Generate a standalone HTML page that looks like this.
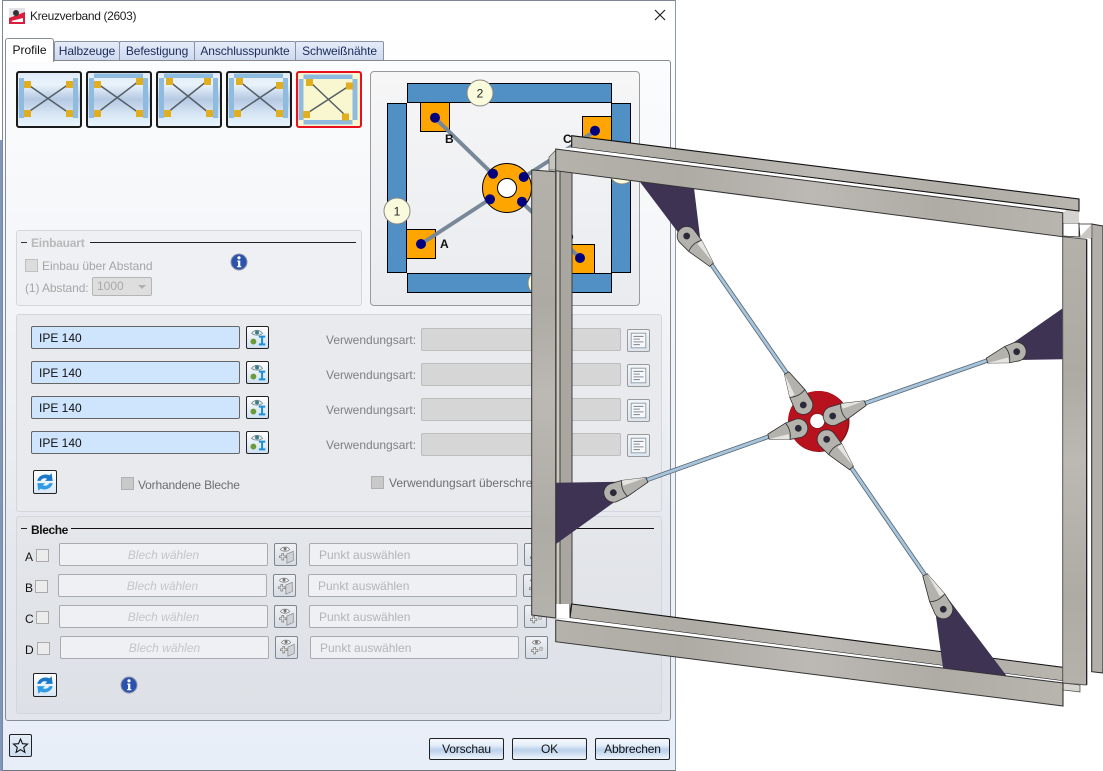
<!DOCTYPE html>
<html><head><meta charset="utf-8"><title>Kreuzverband</title>
<style>
html,body{margin:0;padding:0;background:#fff}
body{position:relative;width:1103px;height:771px;overflow:hidden;font:12px/16px "Liberation Sans",sans-serif;color:#222}
div,span{position:absolute;box-sizing:border-box;white-space:nowrap}
.tab{top:41px;height:20px;border:1px solid #8a93a3;border-bottom:1px solid #888;border-radius:2px 2px 0 0;background:linear-gradient(#e6ecf9,#cdd9f0);color:#1b2a58;text-align:center;line-height:19px;letter-spacing:-.1px}
.thumb{top:71px;width:66px;height:57px;border:2px solid #1a1a1a;border-radius:3px;background:linear-gradient(#dfeaf6,#eaf3fb 22%,#b5c9e3 50%,#d5e4f3 75%,#e8f5fc)}
.thumb svg{position:absolute;left:-1px;top:-1px}
.grp{border:1px solid #d3d6db;border-radius:3px}
.ipe{left:31px;width:209px;height:23px;background:#cfe5fd;border:1px solid #666;border-radius:2px;padding-left:7px;line-height:23px;color:#111}
.ib{width:23px;height:23px;border:1px solid #222;border-radius:2px;background:linear-gradient(#fff,#cfe0f2)}
.ib svg,.db svg{position:absolute;left:0;top:0}
.vl{left:326px;width:92px;color:#808080;line-height:16px}
.vf{left:421px;width:200px;height:23px;background:#d6d6d6;border:1px solid #bdbdbd;border-radius:2px}
.vb{left:627px;width:23px;height:23px;background:linear-gradient(#f2f5f8,#dfe6ee);border:1px solid #999;border-radius:2px}
.cb{width:13px;height:13px;background:#ececec;border:1px solid #aaa}
.cbd{width:13px;height:13px;background:#c9c9c9;border:1px solid #b0b0b0}
.dis{color:#a5a5a5}
.f{width:209px;height:23px;background:#eef0f3;border:1px solid #a8abb0;border-radius:2px;color:#c3c5c8;line-height:23px}
.fi{text-align:center;font-style:italic}
.fp{padding-left:9px;color:#b2b4b7}
.db{width:23px;height:23px;background:linear-gradient(#eef1f4,#d7dde5);border:1px solid #7f8791;border-radius:2px}
.lb{left:25px;color:#111}
.btn{top:738px;width:75px;height:22px;border:1px solid #222;border-radius:2px;background:linear-gradient(#f4f8fc,#e6eff9 30%,#bad0ea 55%,#eef5fc);text-align:center;line-height:20px;color:#111;letter-spacing:-.15px}
.sync{left:33px;width:24px;height:24px;border:1px solid #222;border-radius:2px;background:linear-gradient(#fff,#d8e6f5)}
.sync svg{position:absolute;left:0;top:0}
</style></head><body>

<svg width="0" height="0" style="position:absolute">
<symbol id="ico1" viewBox="0 0 23 23"><path d="M5 7 C8 2.500 14 2.500 17 7 C14 9.500 8 9.500 5 7Z" fill="#e8eeee" stroke="#7a8a8a" stroke-width=".9"/><circle cx="11" cy="6" r="2.200" fill="#3a7f8f"/><circle cx="7" cy="16" r="3.200" fill="#6a9a3a"/><path d="M13 10.500h7M13 19h7M16.500 10.500v8.500" stroke="#1c8fd6" stroke-width="2.200" fill="none"/></symbol>
<symbol id="ico2" viewBox="0 0 23 23"><path d="M6 6 C8 2.500 14 2.500 16 6 C14 8.500 8 8.500 6 6Z" fill="#fff" stroke="#777" stroke-width=".8"/><circle cx="11" cy="5.500" r="1.700" fill="#777"/><path d="M5 13h2.500v-2.500h2v2.500h2.500v2h-2.500v2.500h-2v-2.500h-2.500Z" fill="#eee" stroke="#777" stroke-width=".8"/><path d="M13 11l7-3v10l-7 3Z" fill="#cfd3d8" stroke="#888" stroke-width=".8"/></symbol>
<symbol id="ico3" viewBox="0 0 23 23"><path d="M7 6 C9 3 14 3 16 6 C14 8.500 9 8.500 7 6Z" fill="#fff" stroke="#777" stroke-width=".8"/><circle cx="11.500" cy="5.700" r="1.700" fill="#777"/><path d="M6 14h2.500v-2.500h2v2.500h2.500v2h-2.500v2.500h-2v-2.500h-2.500Z" fill="#eee" stroke="#777" stroke-width=".8"/><circle cx="16.500" cy="13" r="2" fill="#ccc" stroke="#999" stroke-width=".6"/></symbol>
<symbol id="ico4" viewBox="0 0 23 23"><rect x="3.500" y="3.500" width="16" height="16" fill="#f6f8fa" stroke="#8a98a8"/><path d="M6 7h11M6 10h7M6 13h11M6 16h7" stroke="#8a8f98" stroke-width="1.200"/></symbol>
<symbol id="sync" viewBox="2 2 20 20"><path d="M5 11 C6 6 12 4 16 6 L18 4 L19 11 L12 11 L14 9 C11 8 9 9 8 11Z" fill="#1a78c8"/><path d="M19 13 C18 18 12 20 8 18 L6 20 L5 13 L12 13 L10 15 C13 16 15 15 16 13Z" fill="#2f9be6"/></symbol>
<symbol id="info" viewBox="0 0 18 18"><circle cx="9" cy="9" r="8" fill="#2a52ae" stroke="#8c93a8" stroke-width="1"/><circle cx="9" cy="4.800" r="1.600" fill="#fff"/><path d="M7.300 7.500h3v5.500h1v1.200h-4.200v-1.200h1v-4.300h-.8Z" fill="#fff"/></symbol>
</svg>

<!-- dialog -->
<div style="left:0;top:140px;width:3px;height:631px;background:#7e97bd"></div>
<div style="left:2px;top:0;width:674px;height:771px;border:1px solid #7d8793;border-right-color:#8f9aa8;border-bottom-color:#6f7680;background:linear-gradient(#fff,#fff 4%,#f3f6fb 30%,#e8eef8)"></div>
<svg style="position:absolute;left:9px;top:8px" width="16" height="16"><rect width="16" height="16" fill="#e4e4e8"/><path d="M0 16V10L16 4V16Z" fill="#d81e3c"/><circle cx="7" cy="5" r="3" fill="#333"/><path d="M2 13l12-3v4H4Z" fill="#fff"/></svg>
<div style="left:30px;top:8px;color:#222;letter-spacing:-.35px">Kreuzverband (2603)</div>
<svg style="position:absolute;left:654px;top:9px" width="12" height="12"><path d="M1 1L11 11M11 1L1 11" stroke="#222" stroke-width="1.200"/></svg>

<!-- tab panel -->
<div style="left:5px;top:60px;width:666px;height:661px;border:1px solid #878b92;border-radius:3px;background:linear-gradient(#fbfcfd,#f3f5f8 35%,#e4e8ee 75%,#e2e6ec)"></div>
<div class="tab" style="left:54px;width:66px">Halbzeuge</div>
<div class="tab" style="left:119px;width:76px">Befestigung</div>
<div class="tab" style="left:194px;width:102px">Anschlusspunkte</div>
<div class="tab" style="left:295px;width:89px">Schweißnähte</div>
<div style="left:5px;top:37.500px;width:49px;height:24px;border:1px solid #878b92;border-bottom:0;border-radius:3px 3px 0 0;background:#fff;text-align:center;line-height:22px;color:#111">Profile</div>

<!-- thumbnails -->
<div class="thumb" style="left:16px"><svg width="64" height="55"><path d="M10 12L52 41M52 12L10 41" stroke="#555d66" stroke-width="1.500"/><g fill="#8fbbdf"><rect x="2" y="6" width="5" height="40"/><rect x="56" y="6" width="5" height="40"/></g><g fill="#e0ae1e"><rect x="7" y="9" width="7" height="7"/><rect x="49" y="9" width="7" height="7"/><rect x="7" y="38" width="7" height="7"/><rect x="49" y="38" width="7" height="7"/></g></svg></div>
<div class="thumb" style="left:86px"><svg width="64" height="55"><path d="M11 12L52 41M52 9L10 41" stroke="#555d66" stroke-width="1.500"/><g fill="#8fbbdf"><rect x="2" y="6" width="5" height="40"/><rect x="56" y="6" width="5" height="40"/><rect x="7" y="1.500" width="49" height="4.500"/></g><g fill="#e0ae1e"><rect x="7" y="9" width="7" height="7"/><rect x="49" y="6" width="7" height="7"/><rect x="7" y="38" width="7" height="7"/><rect x="49" y="38" width="7" height="7"/></g></svg></div>
<div class="thumb" style="left:156px"><svg width="64" height="55"><path d="M12 9L52 41M50 9L10 41" stroke="#555d66" stroke-width="1.500"/><g fill="#8fbbdf"><rect x="2" y="6" width="5" height="40"/><rect x="56" y="6" width="5" height="40"/><rect x="7" y="1.500" width="49" height="4.500"/></g><g fill="#e0ae1e"><rect x="9" y="6" width="7" height="7"/><rect x="47" y="6" width="7" height="7"/><rect x="7" y="38" width="7" height="7"/><rect x="49" y="38" width="7" height="7"/></g></svg></div>
<div class="thumb" style="left:226px"><svg width="64" height="55"><path d="M12 9L52 41M52 13L10 41" stroke="#555d66" stroke-width="1.500"/><g fill="#8fbbdf"><rect x="2" y="6" width="5" height="40"/><rect x="56" y="6" width="5" height="40"/><rect x="7" y="1.500" width="49" height="4.500"/></g><g fill="#e0ae1e"><rect x="9" y="6" width="7" height="7"/><rect x="49" y="10" width="7" height="7"/><rect x="7" y="38" width="7" height="7"/><rect x="49" y="38" width="7" height="7"/></g></svg></div>
<div class="thumb" style="left:296px;width:66px;height:57px;border:2px solid #e8101c;background:#f8f7d0"><svg width="64" height="55"><path d="M13 10L49 44M52 14L9 42" stroke="#555d66" stroke-width="1.500"/><g fill="#8fbbdf"><rect x="1.500" y="7" width="5" height="41"/><rect x="55.500" y="7" width="5" height="41"/><rect x="6.500" y="2.500" width="49" height="4.500"/><rect x="6.500" y="48" width="49" height="4.500"/></g><g fill="#e0ae1e"><rect x="9" y="7" width="7" height="7"/><rect x="49" y="10.500" width="7" height="7"/><rect x="6" y="39" width="7" height="7"/><rect x="45" y="41.500" width="7" height="7"/></g></svg></div>

<!-- schematic -->
<div style="left:370px;top:71px;width:270px;height:235px;border:1px solid #9a9a9a;border-radius:4px;background:linear-gradient(#f6f6f7,#e9ebef)"></div>
<svg style="position:absolute;left:0;top:0" width="1103" height="771">
<g fill="#5090c4" stroke="#000" stroke-width="1">
<rect x="407.500" y="83.500" width="204" height="19"/><rect x="387.500" y="103.500" width="19" height="169"/><rect x="611.500" y="103.500" width="19" height="169"/><rect x="407.500" y="273.500" width="204" height="19"/></g>
<g fill="#ffa500" stroke="#000" stroke-width="1"><rect x="420.500" y="102.500" width="29" height="29"/><rect x="582.500" y="116.500" width="29" height="29"/><rect x="406.500" y="229.500" width="29" height="29"/><rect x="565.500" y="244.500" width="29" height="29"/></g>
<path d="M435 118L507 188M595 131L507 188M421 244L507 188M580 258L507 188" stroke="#778899" stroke-width="4"/>
<circle cx="507" cy="188" r="24.500" fill="#ffa500" stroke="#000"/><circle cx="507" cy="188" r="9.500" fill="#fff" stroke="#000"/>
<g fill="#00007f"><circle cx="493" cy="173.700" r="5"/><circle cx="523.700" cy="177" r="5"/><circle cx="490" cy="199.300" r="5"/><circle cx="522" cy="201.700" r="5"/><circle cx="435" cy="117.700" r="5"/><circle cx="595" cy="130.700" r="5"/><circle cx="421" cy="244" r="5"/><circle cx="580" cy="258" r="5"/></g>
<g fill="#fafadc" stroke="#888" stroke-width="1"><circle cx="480" cy="93" r="13"/><circle cx="397" cy="211" r="13"/><circle cx="541" cy="283" r="13"/><circle cx="622" cy="171" r="13"/></g>
<g font-family="Liberation Sans, sans-serif" font-size="12" text-anchor="middle" fill="#222"><text x="480" y="97.500">2</text><text x="397" y="215.500">1</text></g>
<g font-family="Liberation Sans, sans-serif" font-size="12" font-weight="bold" fill="#111"><text x="445" y="143">B</text><text x="440" y="248">A</text><text x="563" y="143">C</text><text x="565" y="241">D</text></g>
</svg>

<!-- Einbauart -->
<div class="grp" style="left:16px;top:230px;width:346px;height:76px;background:#eef0f3"></div>
<div style="left:21px;top:242px;width:6px;height:1px;background:#333"></div>
<div style="left:90px;top:242px;width:266px;height:1px;background:#222"></div>
<div style="left:31px;top:235px;font-weight:bold;color:#b9b9b9;letter-spacing:-.2px">Einbauart</div>
<div class="cbd" style="left:25px;top:259px;background:#dcdcdc;border-color:#c0c0c0"></div>
<div class="dis" style="left:42px;top:258px;letter-spacing:-.05px">Einbau über Abstand</div>
<div class="dis" style="left:25px;top:280px;letter-spacing:-.1px">(1) Abstand:</div>
<div style="left:92px;top:277px;width:60px;height:19px;background:#dedede;border:1px solid #b5b5b5;border-radius:2px;color:#a8a8a8;padding-left:4px;line-height:17px">1000</div>
<div style="left:138px;top:285px;width:0;height:0;border:4px solid transparent;border-top:4px solid #b0b0b0"></div>
<svg style="position:absolute;left:230px;top:253px" width="18" height="18"><use href="#info"/></svg>

<!-- Profile group -->
<div class="grp" style="left:16px;top:314px;width:646px;height:198px;background:#e8eaee"></div>
<div class="ipe" style="top:326px">IPE 140</div><div class="ib" style="left:246px;top:326px"><svg width="21" height="21"><use href="#ico1"/></svg></div>
<div class="ipe" style="top:361px">IPE 140</div><div class="ib" style="left:246px;top:361px"><svg width="21" height="21"><use href="#ico1"/></svg></div>
<div class="ipe" style="top:396px">IPE 140</div><div class="ib" style="left:246px;top:396px"><svg width="21" height="21"><use href="#ico1"/></svg></div>
<div class="ipe" style="top:431px">IPE 140</div><div class="ib" style="left:246px;top:431px"><svg width="21" height="21"><use href="#ico1"/></svg></div>

<div class="vl" style="top:332px">Verwendungsart:</div><div class="vf" style="top:328px"></div><div class="vb" style="top:329px"><svg style="position:absolute;left:0;top:0" width="21" height="21"><use href="#ico4"/></svg></div>
<div class="vl" style="top:367px">Verwendungsart:</div><div class="vf" style="top:363px"></div><div class="vb" style="top:364px"><svg style="position:absolute;left:0;top:0" width="21" height="21"><use href="#ico4"/></svg></div>
<div class="vl" style="top:402px">Verwendungsart:</div><div class="vf" style="top:398px"></div><div class="vb" style="top:399px"><svg style="position:absolute;left:0;top:0" width="21" height="21"><use href="#ico4"/></svg></div>
<div class="vl" style="top:437px">Verwendungsart:</div><div class="vf" style="top:433px"></div><div class="vb" style="top:434px"><svg style="position:absolute;left:0;top:0" width="21" height="21"><use href="#ico4"/></svg></div>

<div class="sync" style="top:470px"><svg width="22" height="22"><use href="#sync"/></svg></div>
<div class="cbd" style="left:121px;top:477px"></div>
<div style="left:138px;top:477px;color:#6e6e6e;letter-spacing:-.18px">Vorhandene Bleche</div>
<div class="cbd" style="left:371px;top:476px"></div>
<div style="left:389px;top:475px;color:#6e6e6e">Verwendungsart überschreiben</div>

<!-- Bleche group -->
<div class="grp" style="left:16px;top:516px;width:646px;height:198px;background:linear-gradient(#e4e6ea,#dde1e7)"></div>
<div style="left:21px;top:528px;width:6px;height:1px;background:#222"></div>
<div style="left:71px;top:528px;width:583px;height:1px;background:#111"></div>
<div style="left:31px;top:522px;font-weight:bold;color:#111;letter-spacing:-.4px">Bleche</div>

<div class="lb" style="top:549px">A</div><div class="cb" style="left:36px;top:549px"></div>
<div class="f fi" style="left:59px;top:543px">Blech wählen</div><div class="db" style="left:274px;top:543px"><svg width="21" height="21"><use href="#ico2"/></svg></div>
<div class="f fp" style="left:309px;top:543px">Punkt auswählen</div><div class="db" style="left:524px;top:543px"><svg width="21" height="21"><use href="#ico3"/></svg></div>

<div class="lb" style="top:580px">B</div><div class="cb" style="left:35px;top:580px"></div>
<div class="f fi" style="left:58px;top:574px">Blech wählen</div><div class="db" style="left:273px;top:574px"><svg width="21" height="21"><use href="#ico2"/></svg></div>
<div class="f fp" style="left:308px;top:574px">Punkt auswählen</div><div class="db" style="left:523px;top:574px"><svg width="21" height="21"><use href="#ico3"/></svg></div>

<div class="lb" style="top:611px">C</div><div class="cb" style="left:36px;top:611px"></div>
<div class="f fi" style="left:59px;top:605px">Blech wählen</div><div class="db" style="left:274px;top:605px"><svg width="21" height="21"><use href="#ico2"/></svg></div>
<div class="f fp" style="left:309px;top:605px">Punkt auswählen</div><div class="db" style="left:524px;top:605px"><svg width="21" height="21"><use href="#ico3"/></svg></div>

<div class="lb" style="top:642px">D</div><div class="cb" style="left:37px;top:642px"></div>
<div class="f fi" style="left:60px;top:636px">Blech wählen</div><div class="db" style="left:275px;top:636px"><svg width="21" height="21"><use href="#ico2"/></svg></div>
<div class="f fp" style="left:310px;top:636px">Punkt auswählen</div><div class="db" style="left:525px;top:636px"><svg width="21" height="21"><use href="#ico3"/></svg></div>

<div class="sync" style="top:673px"><svg width="22" height="22"><use href="#sync"/></svg></div>
<svg style="position:absolute;left:120px;top:676px" width="18" height="18"><use href="#info"/></svg>

<!-- bottom -->
<div style="left:9px;top:734px;width:23px;height:23px;border:1px solid #222;border-radius:2px;background:linear-gradient(#e4edf7,#cfdff0)"><svg style="position:absolute;left:0;top:0" width="21" height="21"><path d="M10.500 4l2 4.700 5 .4-3.800 3.300 1.200 4.900-4.400-2.600-4.400 2.600 1.200-4.900L3.500 9.100l5-.4Z" fill="none" stroke="#111" stroke-width="1.100"/></svg></div>
<div class="btn" style="left:429px">Vorschau</div>
<div class="btn" style="left:512px">OK</div>
<div class="btn" style="left:595px">Abbrechen</div>

<!-- 3D frame -->
<svg style="position:absolute;left:0;top:0" width="1103" height="771">
<defs>
<linearGradient id="st" x1="0" y1="0" x2="1" y2="0"><stop offset="0" stop-color="#b5b2ac"/><stop offset=".25" stop-color="#aeaba5"/><stop offset=".5" stop-color="#bcb9b4"/><stop offset=".75" stop-color="#afaca6"/><stop offset="1" stop-color="#b8b5af"/></linearGradient>
<linearGradient id="sv" x1="0" y1="0" x2="0" y2="1"><stop offset="0" stop-color="#b4b1ab"/><stop offset=".3" stop-color="#adaaa4"/><stop offset=".5" stop-color="#bcb9b4"/><stop offset=".8" stop-color="#aeaba5"/><stop offset="1" stop-color="#b5b2ac"/></linearGradient>
</defs>
<!-- back columns -->
<rect x="556" y="151" width="4" height="453" fill="#c9c6bd"/>
<rect x="560" y="151" width="12" height="453" fill="#aaa7a1"/>
<path d="M556 151V604M560 151V604M572 151V604" stroke="#3c3c3c" stroke-width="1" fill="none"/>
<path d="M1091.700 224L1103 226V673L1091.700 671.700Z" fill="#b2afaa" stroke="#222" stroke-width="1"/>
<!-- corner pieces -->
<path d="M549 170V157L556 150V170Z" fill="#c7c5bf" stroke="#555" stroke-width=".7"/>
<path d="M1063 223L1079 223V237L1063 236Z" fill="#fff" stroke="#222" stroke-width=".8"/>
<path d="M1063 213L1079 199V223H1063Z" fill="#d4d2ce"/>
<path d="M1079 224H1091.700V238L1080 237Z" fill="#fff" stroke="#222" stroke-width=".7"/>
<path d="M1079 238L1091.700 224V238Z" fill="#c9c7c2"/>
<path d="M1063 683L1080 685V692L1063 690Z" fill="#d7d5d0" stroke="#444" stroke-width=".7"/>
<path d="M557 604H571V618H557Z" fill="#fff"/>
<!-- back beams -->
<path d="M571.700 135.700L1079 199V211L571.700 147.500Z" fill="url(#st)" stroke="#111" stroke-width="1.100"/>
<path d="M571.700 147.500L1063 210L1063 213L556 149Z" fill="#fff"/>
<path d="M571.700 604L1063 667.300V681L570 618Z" fill="url(#st)" stroke="#111" stroke-width="1.100"/>
<path d="M570 618L1063 681V683L556 620Z" fill="#fff"/>
<path d="M570 604V618M1063 667V683" stroke="#222" stroke-width="1"/>
<!-- plates -->
<path d="M640 182L694 188L700 237L680 235Z" fill="#3f3354"/>
<path d="M1062.700 308.300V359.300L1018 360L1010 345Z" fill="#3f3354"/>
<path d="M556 482.700L620 481.700V498L556 544Z" fill="#3f3354"/>
<path d="M946.700 596.700L1006.700 676L943 668L936 616.700Z" fill="#3f3354"/>
<!-- rods -->
<g fill="none" stroke-linecap="butt">
<path d="M711.700 265L786.700 373M865 403.300L986.700 360.700M768.300 436.700L646.700 480M851.700 468.300L925 575" stroke="#5d6a76" stroke-width="4.500"/>
<path d="M711.700 265L786.700 373M865 403.300L986.700 360.700M768.300 436.700L646.700 480M851.700 468.300L925 575" stroke="#a6c4dc" stroke-width="2.800"/>
</g>
<!-- hub -->
<circle cx="819" cy="421.500" r="30.500" fill="#8a1018"/>
<circle cx="818" cy="421" r="30" fill="#b8121e"/>
<circle cx="817.300" cy="421" r="7.500" fill="#fff" stroke="#8a1018" stroke-width=".8"/>
<!-- forks -->
<g stroke="#2e2e2e" stroke-width=".8">
<g transform="translate(686.700 236) rotate(49.200)"><path d="M0-9.500A9.500 9.500 0 0 0 0 9.500L13 8.500L38 2.500V-2.500L13-8.500Z" fill="#b4b2ac"/><path d="M13-8.500L38-2.500L13-3Z" fill="#e6e4e0" stroke="none"/><path d="M13-8.500Q9 0 13 8.500" fill="none"/><circle r="3" fill="#2b2740"/></g>
<g transform="translate(1016.700 351.700) rotate(163.300)"><path d="M0-9.500A9.500 9.500 0 0 0 0 9.500L10 8.500L31 2.500V-2.500L10-8.500Z" fill="#b4b2ac"/><path d="M10-8.500L31-2.500L10-3Z" fill="#e6e4e0" stroke="none"/><path d="M10-8.500Q6 0 10 8.500" fill="none"/><circle r="3" fill="#2b2740"/></g>
<g transform="translate(613.300 492.700) rotate(-20.800)"><path d="M0-9.500A9.500 9.500 0 0 0 0 9.500L12 8.500L36 2.500V-2.500L12-8.500Z" fill="#b4b2ac"/><path d="M12-8.500L36-2.500L12-3Z" fill="#e6e4e0" stroke="none"/><path d="M12-8.500Q8 0 12 8.500" fill="none"/><circle r="3" fill="#2b2740"/></g>
<g transform="translate(943.300 609.300) rotate(-118)"><path d="M0-9.500A9.500 9.500 0 0 0 0 9.500L13 8.500L39 2.500V-2.500L13-8.500Z" fill="#b4b2ac"/><path d="M13 8.500L39 2.500L13 3Z" fill="#e6e4e0" stroke="none"/><path d="M13-8.500Q9 0 13 8.500" fill="none"/><circle r="3" fill="#2b2740"/></g>
<g transform="translate(803.300 405) rotate(-117.400)"><path d="M0-9.500A9.500 9.500 0 0 0 0 9.500L13 8.500L36 2.500V-2.500L13-8.500Z" fill="#b4b2ac"/><path d="M13-8.500L36-2.500L13-3Z" fill="#e6e4e0" stroke="none"/><path d="M13-8.500Q9 0 13 8.500" fill="none"/><circle r="3" fill="#2b2740"/></g>
<g transform="translate(832.700 416) rotate(-21.500)"><path d="M0-9.500A9.500 9.500 0 0 0 0 9.500L12 8.500L35 2.500V-2.500L12-8.500Z" fill="#b4b2ac"/><path d="M12-8.500L35-2.500L12-3Z" fill="#e6e4e0" stroke="none"/><path d="M12-8.500Q8 0 12 8.500" fill="none"/><circle r="3" fill="#2b2740"/></g>
<g transform="translate(798.300 428.300) rotate(164.400)"><path d="M0-9.500A9.500 9.500 0 0 0 0 9.500L11 8.500L31 2.500V-2.500L11-8.500Z" fill="#b4b2ac"/><path d="M11-8.500L31-2.500L11-3Z" fill="#e6e4e0" stroke="none"/><path d="M11-8.500Q7 0 11 8.500" fill="none"/><circle r="3" fill="#2b2740"/></g>
<g transform="translate(826.700 439.300) rotate(49.200)"><path d="M0-9.500A9.500 9.500 0 0 0 0 9.500L13 8.500L38 2.500V-2.500L13-8.500Z" fill="#b4b2ac"/><path d="M13-8.500L38-2.500L13-3Z" fill="#e6e4e0" stroke="none"/><path d="M13-8.500Q9 0 13 8.500" fill="none"/><circle r="3" fill="#2b2740"/></g>
</g>
<!-- front members -->
<path d="M531.700 170L555.700 171.700V618L531.700 615Z" fill="url(#sv)" stroke="#333" stroke-width="1"/>
<path d="M1062.700 236.700L1086.700 239.300V685L1062.700 683Z" fill="url(#sv)"/>
<path d="M1086.700 239.300V685" stroke="#111" stroke-width="1.200" fill="none"/>
<path d="M1062.700 236.700L1086.700 239.300M1062.700 236.700V683L1086.700 685" stroke="#555" stroke-width="1" fill="none"/>
<path d="M555.700 149L1062.700 212.700V236.700L555.700 170.700Z" fill="url(#st)" stroke="#333" stroke-width="1"/>
<path d="M555.700 620L1063 683V706L555.700 641.700Z" fill="url(#st)" stroke="#333" stroke-width="1"/>
<path d="M1063 683V706" stroke="#222" stroke-width="1"/>
</svg>
</body></html>
